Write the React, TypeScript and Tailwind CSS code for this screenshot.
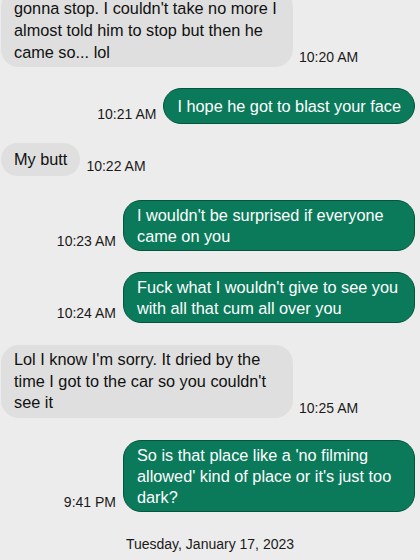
import React from "react";

const font = { fontFamily: '"Liberation Sans", Arial, sans-serif' };

function Received({ lines, time, mt }: { lines: string[]; time: string; mt: string }) {
  return (
    <div className={`flex items-end ${mt}`}>
      <div className="ml-[1px] rounded-[18px] bg-[#dfdfdf] px-[13px] py-[5px] min-h-[33px] flex flex-col justify-center text-[16.3px] leading-[21.5px] text-[#111] whitespace-nowrap">
        {lines.map((l, i) => (
          <div key={i}>{l}</div>
        ))}
      </div>
      <div className="ml-[6px] mb-[2px] text-[14px] leading-[16px] text-[#1a1a1a] whitespace-nowrap">{time}</div>
    </div>
  );
}

function Sent({ lines, time, mt, fixed }: { lines: string[]; time: string; mt: string; fixed?: boolean }) {
  return (
    <div className={`flex items-end justify-end pr-[5px] ${mt}`}>
      <div className="mr-[7px] mb-[2px] text-[14px] leading-[16px] text-[#1a1a1a] whitespace-nowrap">{time}</div>
      <div
        className={`${fixed ? "w-[292px]" : ""} rounded-[18px] bg-[#0b7a5a] border border-[#05553e] px-[13px] pt-[4px] pb-[3px] min-h-[36px] flex flex-col justify-center text-[16.3px] leading-[21px] text-white whitespace-nowrap`}
      >
        {lines.map((l, i) => (
          <div key={i}>{l}</div>
        ))}
      </div>
    </div>
  );
}

export default function App() {
  return (
    <div className="w-[420px] h-[560px] overflow-hidden bg-[#ececec]" style={font}>
      <div className="flex flex-col">
        <div className="flex items-end -mt-[11px]">
          <div className="ml-[1px] w-[292px] rounded-[18px] bg-[#dfdfdf] px-[13px] pt-[8px] pb-[4px] text-[16.3px] leading-[22px] text-[#111] whitespace-nowrap">
            <div>gonna stop. I couldn't take no more I</div>
            <div>almost told him to stop but then he</div>
            <div>came so... lol</div>
          </div>
          <div className="ml-[6px] mb-[2px] text-[14px] leading-[16px] text-[#1a1a1a] whitespace-nowrap">10:20 AM</div>
        </div>
        <Sent mt="mt-[21px]" lines={["I hope he got to blast your face"]} time="10:21 AM" />
        <Received mt="mt-[19px]" lines={["My butt"]} time="10:22 AM" />
        <Sent
          mt="mt-[24px]"
          fixed
          lines={["I wouldn't be surprised if everyone", "came on you"]}
          time="10:23 AM"
        />
        <Sent
          mt="mt-[21px]"
          fixed
          lines={["Fuck what I wouldn't give to see you", "with all that cum all over you"]}
          time="10:24 AM"
        />
        <div className="flex items-end mt-[22px]">
          <div className="ml-[1px] w-[292px] rounded-[18px] bg-[#dfdfdf] px-[13px] py-[4px] text-[16.3px] leading-[21.5px] text-[#111] whitespace-nowrap">
            <div>Lol I know I'm sorry. It dried by the</div>
            <div>time I got to the car so you couldn't</div>
            <div>see it</div>
          </div>
          <div className="ml-[6px] mb-[2px] text-[14px] leading-[16px] text-[#1a1a1a] whitespace-nowrap">10:25 AM</div>
        </div>
        <Sent
          mt="mt-[22px]"
          fixed
          lines={["So is that place like a 'no filming", "allowed' kind of place or it's just too", "dark?"]}
          time="9:41 PM"
        />
        <div className="mt-[23px] text-center text-[14px] leading-[18px] text-[#1a1a1a]">Tuesday, January 17, 2023</div>
      </div>
    </div>
  );
}
